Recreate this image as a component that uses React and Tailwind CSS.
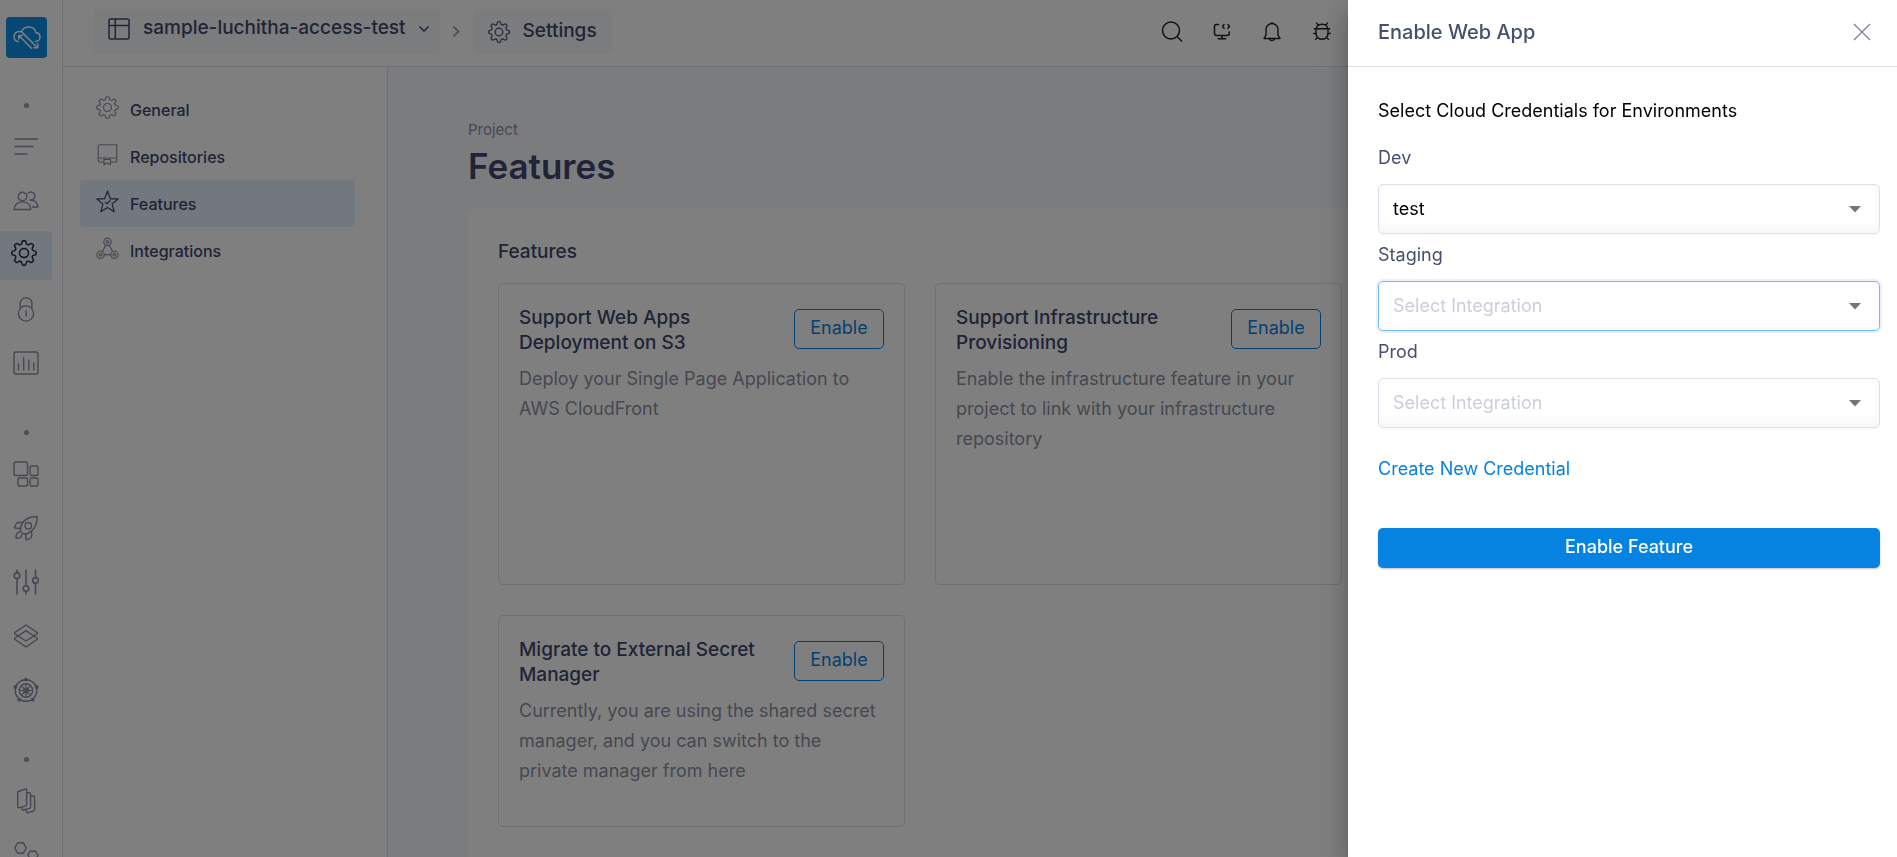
import React from "react";

function gearPath(cx, cy, outer, inner) {
  const pts = [];
  const teeth = 8;
  for (let i = 0; i < teeth; i++) {
    const a = (i * 2 * Math.PI) / teeth - Math.PI / 2;
    const p = (r, d) => `${(cx + r * Math.cos(a + d)).toFixed(2)} ${(cy + r * Math.sin(a + d)).toFixed(2)}`;
    const ri = inner;
    pts.push(`${i === 0 ? "M" : "L"}${p(ri, -0.25)}`);
    pts.push(`L${p(outer - 0.8, -0.17)}`);
    pts.push(`Q${p(outer, -0.15)} ${p(outer, -0.06)}`);
    pts.push(`L${p(outer, 0.06)}`);
    pts.push(`Q${p(outer, 0.15)} ${p(outer - 0.8, 0.17)}`);
    pts.push(`L${p(ri, 0.25)}`);
    pts.push(`Q${p(ri - 1.1, 0.39)} ${p(ri, Math.PI / 4 - 0.25)}`);
  }
  return pts.join(" ") + "Z";
}

const GEAR = gearPath(13, 13, 12.2, 9.6);

function Svg({ size = 26, sw = 1.4, className = "", children }) {
  return (
    <svg
      width={size}
      height={size}
      viewBox="0 0 26 26"
      fill="none"
      stroke="currentColor"
      strokeWidth={sw}
      strokeLinecap="round"
      strokeLinejoin="round"
      className={`shrink-0 ${className}`}
      aria-hidden="true"
    >
      {children}
    </svg>
  );
}

const Gear = (p) => (
  <Svg {...p}>
    <path d={GEAR} />
    <circle cx="13" cy="13" r="4.5" />
  </Svg>
);

const Lines = () => (
  <Svg>
    <path d="M2 5h22.500M2 12.500h18M2 20h12" />
  </Svg>
);

const People = () => (
  <Svg>
    <circle cx="9.500" cy="8.500" r="4.300" />
    <path d="M1.200 21.500c0-4.600 3.200-7.600 8.300-7.600s8.300 3 8.300 7.600z" />
    <path d="M14.900 5.600a3.900 3.900 0 1 1 2.300 6.300M17.300 12.300c4.400-.5 7.500 2 7.500 6.700h-5.300" />
  </Svg>
);

const Lock = () => (
  <Svg>
    <circle cx="13" cy="17.500" r="7.600" />
    <path d="M7.200 12V6.900a5.900 5.900 0 0 1 11.700 0V12M13.200 15v5" />
  </Svg>
);

const Chart = () => (
  <Svg>
    <rect x="1" y="2" width="24" height="22" rx="2" />
    <path d="M5.500 14v6M10.700 7.500V20M15.800 10v10M20.800 13v7" />
  </Svg>
);

const Blocks = () => (
  <Svg>
    <rect x="1" y="1" width="13.500" height="13.500" rx="1.500" />
    <rect x="17" y="5" width="8" height="9.500" rx="1.500" />
    <rect x="5" y="17" width="9.500" height="8" rx="1.500" />
    <rect x="17" y="17" width="8" height="8" rx="1.500" />
  </Svg>
);

const Rocket = () => (
  <Svg>
    <path d="M24.200 1.500c-8.500 0-14.500 4-16.400 10.300l-.5 4.300 2.900 2.900 4.300-.5c6.200-2.500 9.700-8.500 9.700-17z" />
    <circle cx="15.300" cy="10.700" r="3.200" />
    <path d="M9.500 7.500H5.400c-1.200 0-2 .6-2.500 1.700L1.500 13l5.800.5M18.700 16.500v4.600c0 1-.5 1.900-1.500 2.300l-4 1.400-.5-5.600M6.300 17.300c-2.500 0-3.500 2.600-3.200 6 3.100.1 5.500-.8 5.500-3.600" />
  </Svg>
);

const Sliders = () => (
  <Svg sw={1.6}>
    <path d="M4 1v3M4 9.500V25M13 1v15.500M13 22.500V25M22.500 1v7.500M22.500 14V25" />
    <circle cx="4" cy="6.700" r="2.800" />
    <circle cx="13" cy="19.500" r="2.800" />
    <circle cx="22.500" cy="11.400" r="2.800" />
  </Svg>
);

const Layers = () => (
  <Svg>
    <path d="M13 2 24 9.300c.6.400.6 1.100 0 1.500L13 18 2 10.800c-.6-.4-.6-1.100 0-1.500z" />
    <path d="M13 7.700 24 15c.6.400.6 1.100 0 1.500L13 23.800 2 16.500c-.6-.4-.6-1.100 0-1.500z" />
  </Svg>
);

const Helm = () => (
  <Svg>
    <circle cx="13" cy="13.500" r="10.800" />
    <circle cx="13" cy="13.500" r="6.700" />
    <circle cx="13" cy="13.500" r="2.400" />
    <path d="M13 7v13M6.500 13.500h13M8.400 8.900l9.200 9.200M17.600 8.900l-9.200 9.200" strokeWidth="1.200" />
    <g fill="currentColor" stroke="none">
      <circle cx="13" cy="2.300" r="1.900" />
      <circle cx="2.200" cy="10" r="1.900" />
      <circle cx="23.800" cy="10" r="1.900" />
      <circle cx="6.200" cy="22.700" r="1.900" />
      <circle cx="19.800" cy="22.700" r="1.900" />
    </g>
  </Svg>
);

const Pages = () => (
  <Svg>
    <path d="M5.500 3.500 12 1.100c1-.3 1.600.1 1.600 1v14.400c0 .7-.4 1.200-1 1.400l-6.200 1.800c-1 .3-1.700-.2-1.700-1V4.800c0-.6.300-1.100.8-1.300z" />
    <path d="M13.800 4.800h2.300c.9 0 1.500.5 1.500 1.400v12.700c0 .7-.4 1.200-1.100 1.400l-5.800 1.700c-1 .3-1.800-.2-1.800-1.300v-1.200" />
    <path d="M17.800 8h2.300c.9 0 1.500.5 1.500 1.400v12.200c0 .7-.4 1.200-1.100 1.400l-5.300 1.700c-1 .3-1.800-.2-1.800-1.300v-1.700" />
  </Svg>
);

const Hexes = () => (
  <Svg>
    <path d="M4.700 .8h5.600l3 5.200-3 5.200H4.700L1.700 6z" />
    <path d="M15 12.500l2-3.300h5.500l2.500 4.300-2.500 4.500H17z" />
    <path d="M7.500 16h4.600l2.400 4-2.400 4.500H7.500L5 20z" />
  </Svg>
);

const Repo = ({ className }) => (
  <Svg sw={1.300} className={className}>
    <path d="M9 21.500H4.500c-1.400 0-2-.8-2-2V4c0-1.400.8-2 2-2h19v19.500h-6M2.500 17h21" />
    <path d="M9 18.500v6l3.700-2.300 3.700 2.300v-6z" />
  </Svg>
);

const Star = ({ className }) => (
  <Svg sw={1.400} className={className}>
    <path d="m13 1.200 3.200 8.700 8.800.2-6.800 5.600 2.400 9L13 19.700l-7.600 5 2.400-9L1 10.100l8.800-.2z" />
    <path d="m10.500 13.700 2 2 3.300-3.700" />
  </Svg>
);

const Nodes = ({ className }) => (
  <Svg sw={1.300} className={className}>
    <circle cx="13" cy="5.500" r="4.200" />
    <circle cx="13" cy="5.500" r="1.500" />
    <circle cx="5.200" cy="20" r="4.200" />
    <circle cx="5.200" cy="20" r="1.500" />
    <circle cx="20.800" cy="20" r="4.200" />
    <circle cx="20.800" cy="20" r="1.500" />
    <path d="M11 9.200 7.300 16.300M15 9.200l3.700 7.100M9.400 20h7.200" />
  </Svg>
);

const rail = [
  [
    { label: "Overview", Icon: Lines },
    { label: "Members", Icon: People },
    { label: "Settings", Icon: Gear, active: true },
    { label: "Access", Icon: Lock },
    { label: "Usage", Icon: Chart },
  ],
  [
    { label: "Components", Icon: Blocks },
    { label: "Deploy", Icon: Rocket },
    { label: "Configure", Icon: Sliders },
    { label: "Layers", Icon: Layers },
    { label: "Clusters", Icon: Helm },
  ],
  [
    { label: "Documents", Icon: Pages },
    { label: "Services", Icon: Hexes },
  ],
];

function Rail() {
  return (
    <nav aria-label="Main" className="flex w-[63px] shrink-0 flex-col overflow-hidden border-r border-[#dedfe8] bg-white text-[#8d91a3]">
      <a href="#home" aria-label="Home" className="mt-[17px] ml-1.5 flex size-[41px] shrink-0 items-center justify-center rounded bg-[#0d8ee8] text-white">
        <svg width="28" height="24" viewBox="0 0 28 24" fill="none" stroke="currentColor" strokeWidth="1.500" strokeLinecap="round" strokeLinejoin="round" aria-hidden="true">
          <path d="M5.500 15.800A5.200 5.200 0 0 1 1 10.600 5.200 5.200 0 0 1 6.300 5.400c1 0 2 .3 2.700.8M8.500 5.600C9.700 2.800 12.500 1 15.700 1c3.700 0 6.500 2.400 7.100 5.600 2.400.3 4.200 2.100 4.200 4.400 0 2.500-2 4.500-4.500 4.500" />
          <path d="M5.700 13V9.500h3.800M6.500 10.300 18.500 22.300M9.700 6.900 23.500 20.700M20.800 21.800h4v-4" />
        </svg>
      </a>
      <div className="mt-[5px]">
        {rail.map((group, i) => (
          <div key={i}>
            <div className="flex h-[57px] w-[52px] justify-center pt-10">
              <span className="size-[5px] rounded-full bg-[#9a9dac]" />
            </div>
            <ul>
              {group.map(({ label, Icon, active }) => (
                <li key={label} className="flex h-[54px] items-center">
                  <a
                    href={`#${label.toLowerCase()}`}
                    aria-label={label}
                    className={`flex h-[49px] w-[52px] items-center justify-center rounded-r ${active ? "bg-[#e6f0ff] pr-1 pb-1 text-[#1d2030]" : ""}`}
                  >
                    <Icon />
                  </a>
                </li>
              ))}
            </ul>
          </div>
        ))}
      </div>
    </nav>
  );
}

function Header() {
  return (
    <header className="flex h-[67px] shrink-0 items-start border-b border-[#dedfe8] bg-white pt-[9px] pl-[30px] text-[19px] font-medium text-[#40486c]">
      <button type="button" className="flex h-[45px] items-center gap-[13px] rounded bg-[#f7f8fb] pr-[11px] pb-1.5 pl-[15px] whitespace-nowrap">
        <svg width="22" height="22" viewBox="0 0 22 22" fill="none" stroke="currentColor" strokeWidth="1.500" aria-hidden="true">
          <rect x="1" y="1" width="20" height="20" rx="1.500" />
          <path d="M1 7.500h20M7.300 1v20" />
        </svg>
        sample-luchitha-access-test
        <svg width="10" height="6" viewBox="0 0 10 6" fill="none" stroke="currentColor" strokeWidth="1.500" aria-hidden="true">
          <path d="m.5.500 4.500 4.500L9.500.500" />
        </svg>
      </button>
      <svg width="33" height="45" viewBox="0 0 33 45" fill="none" stroke="#a4a8ba" strokeWidth="2" aria-hidden="true">
        <path d="m13.500 17.500 5 5-5 5" />
      </svg>
      <a href="#settings" className="flex h-[45px] items-center gap-[13px] rounded bg-[#f7f8fb] px-[15px]">
        <Gear size={22} sw={1.400} />
        Settings
      </a>
      <div className="mr-[563px] ml-auto flex h-[45px] items-center gap-[26px] text-[#20222c]">
        <button type="button" aria-label="Search" className="size-6">
          <svg width="24" height="24" viewBox="0 0 24 24" fill="none" stroke="currentColor" strokeWidth="1.500" aria-hidden="true">
            <circle cx="11" cy="10.500" r="8.500" />
            <path d="m17.300 16.800 4.700 4.700" />
          </svg>
        </button>
        <button type="button" aria-label="Console" className="size-6">
          <svg width="24" height="24" viewBox="0 0 24 24" fill="none" stroke="currentColor" strokeWidth="1.500" strokeLinecap="round" strokeLinejoin="round" aria-hidden="true">
            <path d="M8.500 4.500H6.500a2 2 0 0 0-2 2v7a2 2 0 0 0 2 2h10.700a2 2 0 0 0 2-2v-1.500M12 15.500v3.300M8.300 18.800h7.400M14 4.500l-1.500 1.900L14 8.300M18 4.500l1.500 1.900L18 8.300" />
          </svg>
        </button>
        <button type="button" aria-label="Notifications" className="size-6">
          <svg width="24" height="24" viewBox="0 0 24 24" fill="none" stroke="currentColor" strokeWidth="1.400" strokeLinejoin="round" aria-hidden="true">
            <path d="M12 2v1.600M4 18.500l2-3.700V9.500a6 6 0 0 1 12 0v5.300l2 3.700zM9.200 18.700c.6 2.600 5 2.600 5.600 0" />
          </svg>
        </button>
        <button type="button" aria-label="Report a bug" className="size-6">
          <svg width="24" height="24" viewBox="0 0 24 24" fill="none" stroke="currentColor" strokeWidth="1.400" aria-hidden="true">
            <path d="M12 4.200c3.600 0 6 2.400 6 6v2.600c0 3.800-2.300 6.400-6 6.400s-6-2.600-6-6.400v-2.600c0-3.600 2.400-6 6-6zM3.800 8.700h16.400M8.300 5.300 6.300 2.600M15.700 5.300l2-2.700M3.300 13.500h2.900M17.800 13.500h2.900M7.500 17.300l-2.300 2.600M16.500 17.300l2.300 2.600" />
          </svg>
        </button>
      </div>
    </header>
  );
}

const sections = [
  { label: "General", Icon: Gear },
  { label: "Repositories", Icon: Repo },
  { label: "Features", Icon: Star, active: true },
  { label: "Integrations", Icon: Nodes },
];

function SettingsNav() {
  return (
    <nav aria-label="Settings" className="w-[325px] shrink-0 border-r border-[#dedfe8] bg-white pt-[19px] pr-8 pl-[17px]">
      <ul>
        {sections.map(({ label, Icon, active }) => (
          <li key={label}>
            <a
              href={`#${label.toLowerCase()}`}
              className={`flex h-[47px] items-center gap-[11px] rounded pl-4 text-base font-medium text-[#40486c] ${active ? "bg-[#e6f0ff]" : ""}`}
            >
              <span className={`pb-1 ${active ? "text-[#40486c]" : "text-[#8d91a3]"}`}>
                <Icon size={23} sw={1.300} className="size-[23px]" />
              </span>
              {label}
            </a>
          </li>
        ))}
      </ul>
    </nav>
  );
}

const features = [
  {
    title: ["Support Web Apps", "Deployment on S3"],
    text: "Deploy your Single Page Application to AWS CloudFront",
    place: "col-start-1 min-h-[302px]",
  },
  {
    title: ["Support Infrastructure", "Provisioning"],
    text: "Enable the infrastructure feature in your project to link with your infrastructure repository",
    place: "col-start-2 min-h-[302px]",
  },
  {
    title: ["Migrate to External Secret", "Manager"],
    text: "Currently, you are using the shared secret manager, and you can switch to the private manager from here",
    place: "col-start-1 min-h-[212px]",
  },
];

function FeatureCard({ title, text, place }) {
  return (
    <article className={`rounded-[5px] border border-[#dedfe8] px-5 pt-[21px] ${place}`}>
      <div className="flex items-start justify-between">
        <h3 className="text-[19px] leading-[25px] font-medium whitespace-nowrap text-[#40486c]">
          {title[0]}
          <br />
          {title[1]}
        </h3>
        <button type="button" className="mt-1 h-10 w-[90px] rounded-[5px] border border-[#0683e0] pb-0.5 text-lg text-[#0683e0]">
          Enable
        </button>
      </div>
      <p className="mt-[9px] text-lg leading-[30px] text-[#8d91a3]">{text}</p>
    </article>
  );
}

function Field({ id, label, value, focused }) {
  return (
    <div className="flex flex-col">
      <label htmlFor={id} className="leading-6 text-[#484f6d]">
        {label}
      </label>
      <div className="relative mt-[14px] mb-[9px]">
        <select
          id={id}
          defaultValue={value ?? ""}
          className={`h-[50px] w-full appearance-none rounded-[5px] border px-[14px] outline-none ${
            focused
              ? "border-[#70bdf5] shadow-[0_0_0_2px_#eeeffb,inset_0_-4px_12px_rgba(0,0,0,0.02)]"
              : "border-[#dedfe8] shadow-[0_1px_2px_rgba(0,0,0,0.04),inset_0_-4px_12px_rgba(0,0,0,0.04)]"
          } ${value ? "text-black" : "text-[#cbcedb]"}`}
        >
          {value ? <option value={value}>{value}</option> : <option value="">Select Integration</option>}
        </select>
        <svg width="12" height="7" viewBox="0 0 12 7" className="pointer-events-none absolute top-[22px] right-[19px]" aria-hidden="true">
          <path d="M0 0h12L6 6.500z" fill="#757575" />
        </svg>
      </div>
    </div>
  );
}

function Drawer() {
  return (
    <aside
      role="dialog"
      aria-label="Enable Web App"
      className="fixed inset-y-0 right-0 w-[549px] bg-white text-lg shadow-[0_8px_10px_-5px_rgba(0,0,0,0.2),0_16px_24px_2px_rgba(0,0,0,0.14),0_6px_30px_5px_rgba(0,0,0,0.12)]"
    >
      <div className="flex h-[67px] items-center justify-between border-b border-[#dedfe8] pr-[26px] pb-0.5 pl-[30px]">
        <h2 className="text-xl font-medium text-[#484f6d]">Enable Web App</h2>
        <button type="button" aria-label="Close">
          <svg width="18" height="18" viewBox="0 0 18 18" fill="none" stroke="#8084a0" strokeWidth="1.400" aria-hidden="true">
            <path d="m1 1 16 16M17 1 1 17" />
          </svg>
        </button>
      </div>
      <form className="flex flex-col pt-8 pr-[17px] pl-[30px]" onSubmit={(e) => e.preventDefault()}>
        <p className="mb-[23px] leading-6 text-black">Select Cloud Credentials for Environments</p>
        <Field id="dev" label="Dev" value="test" />
        <Field id="staging" label="Staging" focused />
        <Field id="prod" label="Prod" />
        <a href="#credential" className="mt-5 self-start leading-6 text-[#0683e0]">
          Create New Credential
        </a>
        <button type="submit" className="mt-[47px] h-10 rounded-[5px] bg-[#0683e0] pb-0.5 font-medium text-white shadow-[0_1px_2px_rgba(0,0,0,0.25)]">
          Enable Feature
        </button>
      </form>
    </aside>
  );
}

export default function App() {
  return (
    <div className="flex h-screen overflow-hidden bg-white font-[Inter,sans-serif]">
      <Rail />
      <div className="flex min-w-0 flex-1 flex-col">
        <Header />
        <div className="flex min-h-0 flex-1">
          <SettingsNav />
          <main className="min-w-0 flex-1 overflow-hidden bg-[#f7f8fc] pt-[51px] pr-[88px] pl-20">
            <p className="text-[15px] leading-6 text-[#8d91a3]">Project</p>
            <h1 className="mt-0.5 text-[35px] leading-[44px] font-semibold text-[#40486c]">Features</h1>
            <section className="mt-5 rounded-lg bg-white px-[30px] pt-[31px] pb-[60px]">
              <h2 className="text-[19px] leading-[26px] font-medium text-[#40486c]">Features</h2>
              <div className="mt-[18px] grid grid-cols-3 gap-[30px]">
                {features.map((f) => (
                  <FeatureCard key={f.title[0]} {...f} />
                ))}
              </div>
            </section>
          </main>
        </div>
      </div>
      <div className="fixed inset-0 bg-black/50" />
      <Drawer />
    </div>
  );
}
